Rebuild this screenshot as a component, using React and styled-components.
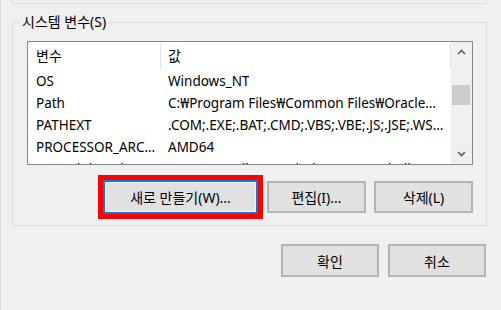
import React from 'react'
import styled, { createGlobalStyle } from 'styled-components'

const GlobalStyle = createGlobalStyle`
  html, body {
    margin: 0;
    padding: 0;
    background: #f0f0f0;
  }
  body {
    font-family: "Noto Sans", "Noto Sans CJK KR", sans-serif;
    font-size: 14px;
    color: #000;
  }
`

const variables = [
  { name: 'OS', value: 'Windows_NT' },
  { name: 'Path', value: 'C:₩Program Files₩Common Files₩Oracle₩Java₩javapath;C:₩WINDOWS₩system32' },
  { name: 'PATHEXT', value: '.COM;.EXE;.BAT;.CMD;.VBS;.VBE;.JS;.JSE;.WSF;.WSH;.MSC' },
  { name: 'PROCESSOR_ARCHITECTURE', value: 'AMD64' },
  { name: 'PSModulePath', value: '%ProgramFiles%₩WindowsPowerShell₩Modules;' },
]

const Window = styled.div`
  width: 501px;
  height: 310px;
  box-sizing: border-box;
  border-left: 1px solid #d9d9d9;
  padding-left: 11px;
  overflow: hidden;
`

const PrevGroup = styled.div`
  width: 475px;
  height: 4px;
  box-sizing: border-box;
  border: 1px solid #dcdcdc;
  border-top: none;
`

const Group = styled.fieldset`
  margin: 10px 0 0 0;
  width: 475px;
  box-sizing: border-box;
  border: 1px solid #dcdcdc;
  padding: 11px 13px 11px 14px;
  min-inline-size: 0;
`

const Legend = styled.legend`
  margin-left: -7px;
  padding: 0 2px;
  line-height: 16px;
  font-size: 14px;
`

const ListBox = styled.div`
  height: 124px;
  box-sizing: border-box;
  border: 1px solid #828790;
  background: #fff;
  display: flex;
  overflow: hidden;
  font-size: 13.5px;
`

const Table = styled.div`
  flex: 1;
  display: grid;
  grid-template-columns: 133px 290px;
  grid-template-rows: 28px;
  grid-auto-rows: 22px;
  align-content: start;
`

const Cell = styled.div`
  display: flex;
  align-items: center;
  padding: 0 ${p => (p.$first ? 4 : 6)}px 0 ${p => (p.$first ? 8 : 7)}px;
  white-space: nowrap;
  overflow: hidden;
  min-width: 0;
  line-height: 22px;
`

const Text = styled.span`
  overflow: hidden;
  text-overflow: ellipsis;
  white-space: nowrap;
`

const HeadCell = styled(Cell)`
  border-right: 1px solid #e5e5e5;
  margin: 1px 0;
  font-size: 14px;
`

const ScrollBar = styled.div`
  width: 21px;
  background: #f0f0f0;
  display: flex;
  flex-direction: column;
`

const ArrowBox = styled.div`
  height: 20px;
  display: flex;
  align-items: center;
  justify-content: center;
  padding-right: 1px;
`

const Track = styled.div`
  flex: 1;
`

const Thumb = styled.div`
  margin: 23px 2px 0 1px;
  height: 20px;
  background: #cdcdcd;
`

const ButtonRow = styled.div`
  display: flex;
  justify-content: flex-end;
  align-items: center;
  gap: 8px;
  margin-top: 15px;
  padding-right: ${p => p.$inset || 0}px;
`

const Button = styled.button`
  width: ${p => p.$w || 99}px;
  height: ${p => p.$h || 32}px;
  box-sizing: border-box;
  background: #e1e1e1;
  border: 2px solid #b4b4b4;
  font-family: "Noto Sans", "Noto Sans CJK KR", sans-serif;
  font-size: 14px;
  color: #000;
  padding: 0;
  margin: 0;
`

const FocusButton = styled(Button)`
  border-color: #0f78d4;
  box-shadow: inset 0 0 0 1px #f4f4f4;
  outline: 5px solid #ff0000;
  outline-offset: 0;
  margin-right: 1px;
`

const DialogRow = styled(ButtonRow)`
  width: 475px;
  box-sizing: border-box;
  margin-top: 18px;
  gap: 9px;
`

const Chevron = ({ up }) => (
  <svg width="9" height="6" viewBox="0 0 9 6">
    <path
      d={up ? 'M1 5 L4.5 1.5 L8 5' : 'M1 1 L4.5 4.5 L8 1'}
      fill="none"
      stroke="#606060"
      strokeWidth="1.6"
    />
  </svg>
)

export default function App() {
  return (
    <Window>
      <GlobalStyle />
      <PrevGroup />
      <Group>
        <Legend>시스템 변수(S)</Legend>
        <ListBox>
          <Table>
            <HeadCell $first>변수</HeadCell>
            <HeadCell>값</HeadCell>
            {variables.map(v => (
              <React.Fragment key={v.name}>
                <Cell $first><Text>{v.name}</Text></Cell>
                <Cell><Text>{v.value}</Text></Cell>
              </React.Fragment>
            ))}
          </Table>
          <ScrollBar>
            <ArrowBox><Chevron up /></ArrowBox>
            <Track><Thumb /></Track>
            <ArrowBox><Chevron /></ArrowBox>
          </ScrollBar>
        </ListBox>
        <ButtonRow>
          <FocusButton $w={155} $h={34}>새로 만들기(W)...</FocusButton>
          <Button>편집(I)...</Button>
          <Button>삭제(L)</Button>
        </ButtonRow>
      </Group>
      <DialogRow $inset={1}>
        <Button $w={98} $h={33}>확인</Button>
        <Button $w={98} $h={33}>취소</Button>
      </DialogRow>
    </Window>
  )
}
